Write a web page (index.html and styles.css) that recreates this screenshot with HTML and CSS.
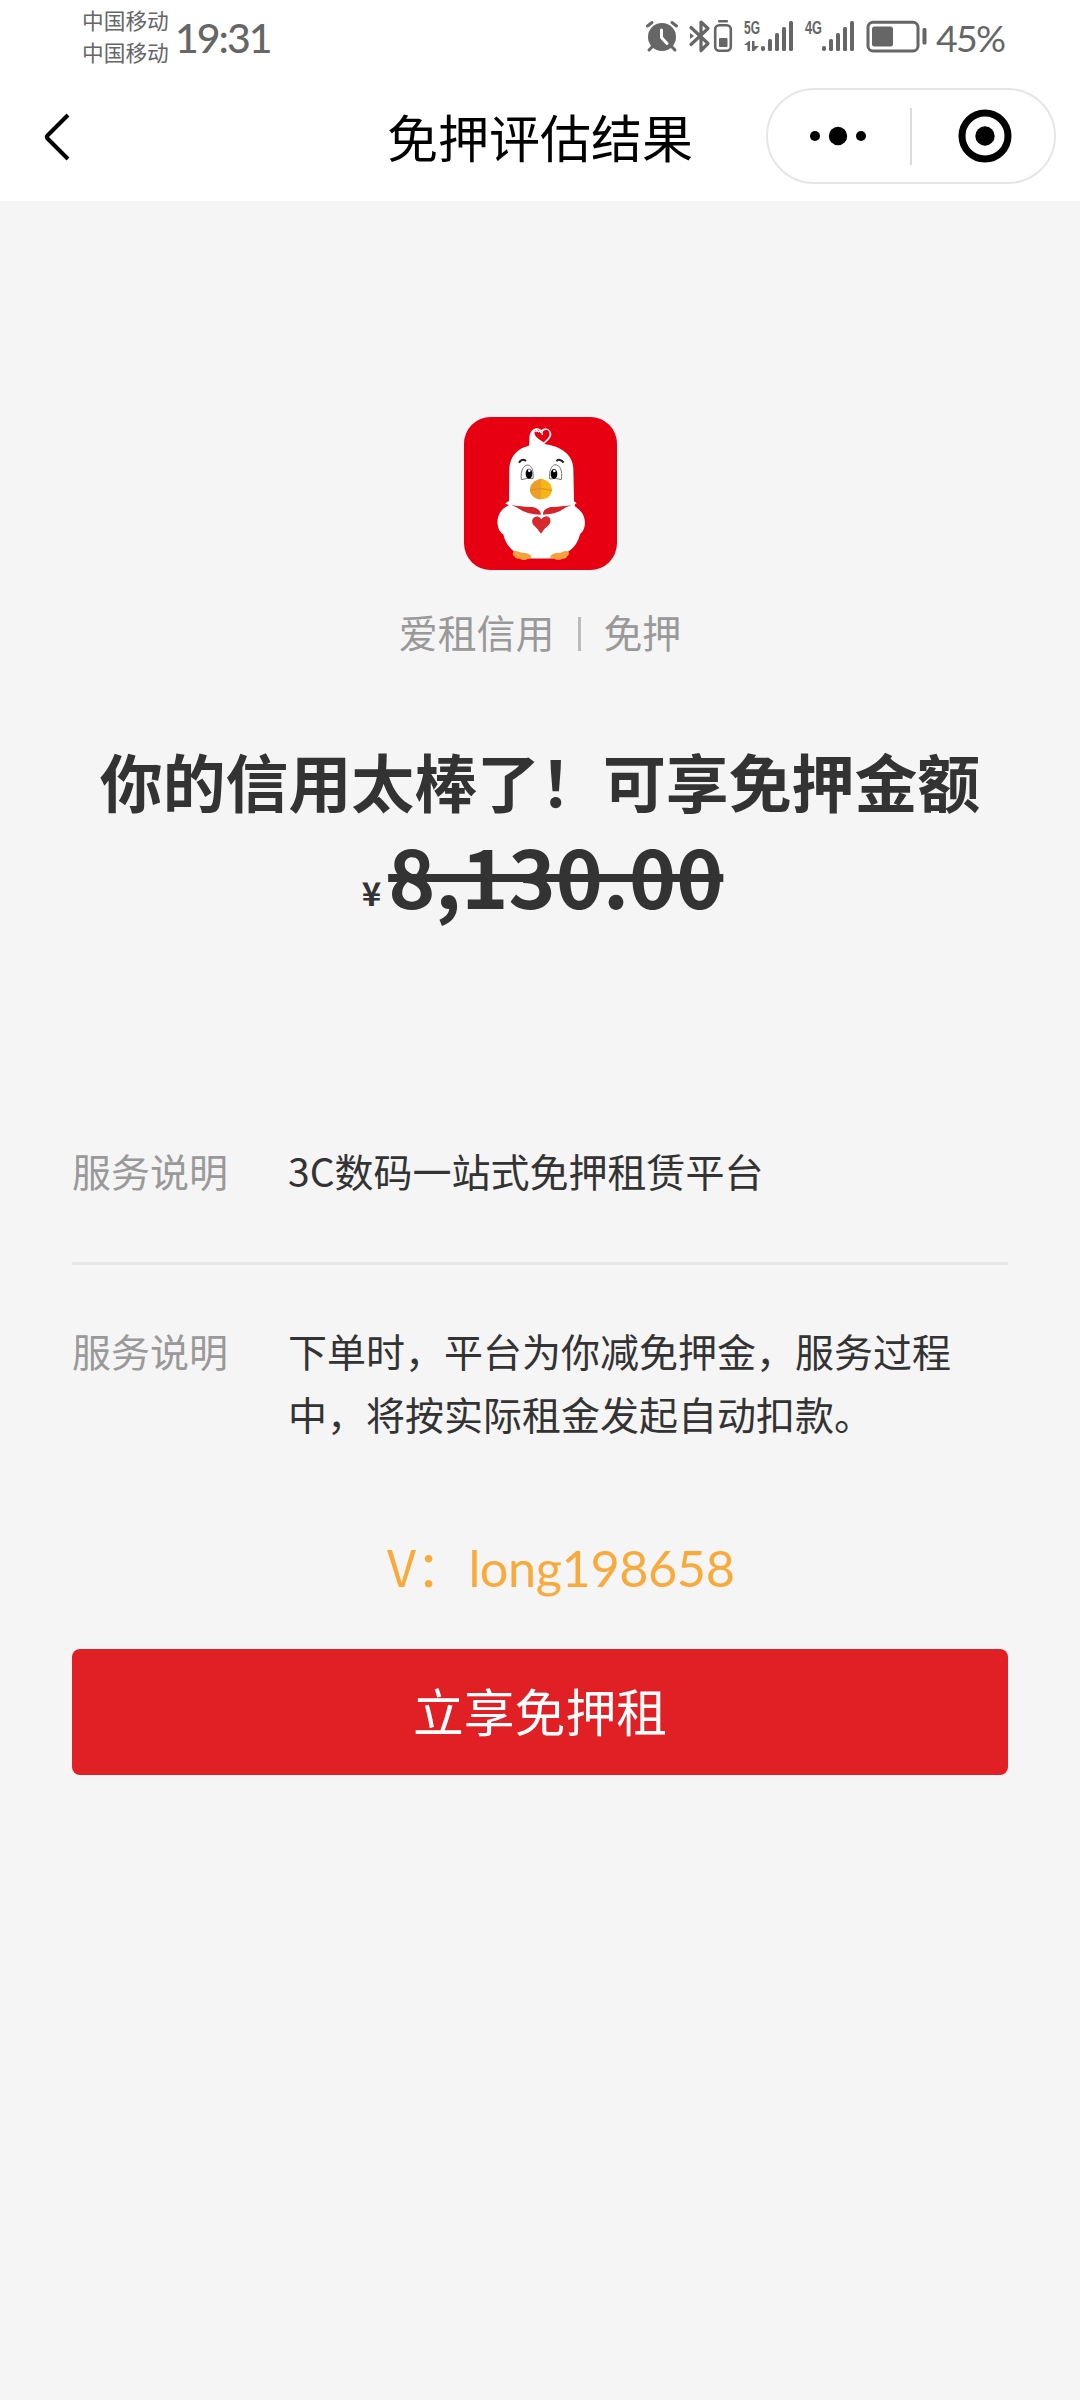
FILE: index.html
```html
<!DOCTYPE html>
<html lang="zh-CN">
<head>
<meta charset="utf-8">
<title>免押评估结果</title>
<link rel="stylesheet" href="styles.css">
</head>
<body>
<header class="top">
  <div class="status">
    <div class="carriers"><span>中国移动</span><span>中国移动</span></div>
    <div class="time">19:31</div>
    <svg class="icons" width="290" height="40" viewBox="640 16 290 40" fill="#666">
      <circle cx="662" cy="37" r="14"/>
      <path d="M647.500 26 652 22.500M676.500 26 672 22.500M652 47 649 50M672 47 675 50" stroke="#666" stroke-width="3" stroke-linecap="round"/>
      <path d="M661.500 30v7.500l5.500 6" fill="none" stroke="#fff" stroke-width="3" stroke-linecap="round" stroke-linejoin="round"/>
      <path d="M691 27.500 708 43.500 701 50.500V22L708 28.500 691 44.500" fill="none" stroke="#666" stroke-width="3.200" stroke-linejoin="round" stroke-linecap="round"/>
      <path d="M690 33l4 3-4 3z"/>
      <rect x="715.200" y="25.200" width="15.600" height="25.600" rx="4" fill="none" stroke="#666" stroke-width="2.600"/>
      <rect x="718" y="20" width="10" height="2.500" rx="1"/><rect x="719" y="38" width="8.500" height="9" rx="1"/>
      <text class="net" x="744" y="34" textLength="16" lengthAdjust="spacingAndGlyphs">5G</text>
      <path d="M744 45l5-4h1v10h-2.500v-6zM752 41h2.500v5h4.500l-5 5h-2z"/>
      <rect x="761" y="46" width="4" height="5" rx="1.800"/><rect x="768" y="39" width="4" height="12" rx="1.500"/><rect x="775" y="33" width="4" height="18" rx="1.500"/><rect x="782" y="27" width="4" height="24" rx="1.500"/><rect x="789" y="21" width="4" height="30" rx="1.500"/>
      <text class="net" x="805" y="34" textLength="17" lengthAdjust="spacingAndGlyphs">4G</text>
      <rect x="822" y="46" width="4" height="5" rx="1.800"/><rect x="829" y="39" width="4" height="12" rx="1.500"/><rect x="836" y="33" width="4" height="18" rx="1.500"/><rect x="843" y="27" width="4" height="24" rx="1.500"/><rect x="850" y="21" width="4" height="30" rx="1.500"/>
      <rect x="868" y="22.300" width="50" height="28.700" rx="5" fill="none" stroke="#666" stroke-width="3"/>
      <rect x="872" y="26.500" width="21" height="20" rx="2.500"/><rect x="922.500" y="28" width="4" height="16.500" rx="1.500"/>
    </svg>
    <div class="percent">45%</div>
  </div>
  <nav class="nav">
    <svg class="back" width="30" height="52" viewBox="0 0 30 52" fill="none" stroke="#000" stroke-width="4"><path d="M25 4 4.500 24.500Q3 26 4.500 27.500L25 48"/></svg>
    <h1 class="title">免押评估结果</h1>
    <div class="capsule">
      <svg class="more" width="58" height="20" viewBox="0 0 58 20"><circle cx="6" cy="10" r="5"/><circle cx="29" cy="10" r="9.200"/><circle cx="52" cy="10" r="5"/></svg>
      <i class="split"></i>
      <svg class="target" width="54" height="54" viewBox="0 0 54 54"><circle cx="27" cy="27" r="23" fill="none" stroke="#000" stroke-width="7"/><circle cx="27" cy="27" r="9.700"/></svg>
    </div>
  </nav>
</header>
<main class="page">
  <svg class="logo" width="153" height="153" viewBox="42 50 459 459">
    <rect x="42" y="50" width="459" height="459" rx="80" fill="#e60012"/>
    <path d="M236 137C241 124 234 108 243 95C250 84 262 80 274 89C288 78 304 88 304 103C302 116 290 122 283 131C328 136 369 161 370 205L372 303L380 309C370 314 373 317 384 325C406 342 411 372 397 394C387 402 389 410 383 421C372 446 350 457 325 472Q273 477 222 472C190 457 166 435 160 402C144 393 137 365 147 343C152 329 165 321 176 315L166 309L177 302L178 203C181 167 204 143 236 137Z" fill="#fff"/>
    <path d="M282 126C266 118 251 106 254 95C259 84 270 87 277 97C284 83 299 87 299 102C298 113 286 120 282 126Z" fill="#e60012"/>
    <path d="M257 95q4-7 8-1q5-5 7 2q6 0 5 8" fill="none" stroke="#fff" stroke-width="4"/>
    <path d="M207 187Q215 173 228 182M319 182Q330 173 341 187" fill="none" stroke="#222" stroke-width="6"/>
    <g fill="#fff" stroke="#777" stroke-width="3"><path d="M214 238C211 210 221 194 234 194C247 197 251 213 249 235Q232 232 214 238Z"/><path d="M299 236C297 213 303 196 315 193C331 194 338 211 334 238Q316 231 299 236Z"/></g>
    <ellipse cx="237" cy="220" rx="10" ry="15"/><ellipse cx="312" cy="221" rx="10" ry="15"/>
    <circle cx="238" cy="211" r="4" fill="#fff"/><circle cx="313" cy="212" r="4" fill="#fff"/>
    <path d="M274 235C292 238 307 252 306 270C304 287 291 297 273 297C255 296 241 284 240 268C240 253 255 238 274 235Z" fill="#f8b616"/>
    <path d="M274 235C255 238 240 253 240 268C242 287 257 297 273 297Z" fill="#eda029"/><path d="M241 270Q274 260 305 271" fill="none" stroke="#d98a22" stroke-width="3"/>
    <path d="M180 312Q207 318 245 319Q271 324 273 343Q229 343 202 322ZM369 312Q343 318 304 319Q278 325 279 343Q324 341 345 322Z" fill="#d5232c"/>
    <path d="M177 312Q273 327 372 312" fill="none" stroke="#fff" stroke-width="3"/>
    <path d="M273 400Q262 384 250 373C240 358 253 345 265 349Q271 351 274 357Q278 349 288 348C304 349 305 366 296 375Q283 384 273 400Z" fill="#d8292f"/>
    <path d="M190 454Q199 449 214 457Q234 456 243 466Q247 476 233 476Q221 482 209 475Q195 476 194 468Q185 464 190 454ZM356 454Q345 449 332 457Q310 456 302 466Q298 476 312 475Q325 482 337 475Q350 476 351 468Q359 464 356 454Z" fill="#f6a13b"/>
  </svg>
  <p class="brand"><span>爱租信用</span><i class="bar"></i><span>免押</span></p>
  <h2 class="headline">你的信用太棒了！可享免押金额</h2>
  <p class="amount"><span class="yen">¥</span><s class="price">8,130.00</s></p>
  <dl class="details">
    <div class="row"><dt>服务说明</dt><dd>3C数码一站式免押租赁平台</dd></div>
    <div class="row second"><dt>服务说明</dt><dd>下单时，平台为你减免押金，服务过程中，将按实际租金发起自动扣款。</dd></div>
  </dl>
  <p class="contact">V：<span>long198658</span></p>
  <button class="submit">立享免押租</button>
</main>
</body>
</html>
```
FILE: styles.css
```css
* { box-sizing: border-box; margin: 0; padding: 0; }
body {
  width: 1080px;
  min-height: 2400px;
  background: #f5f5f5;
  color: #333;
  font-family: "Noto Sans CJK SC", sans-serif;
}
svg { display: block; flex: none; }
.top { height: 201px; background: #fff; }
.status {
  display: flex;
  height: 72px;
  padding-left: 82px;
  color: #666;
  white-space: nowrap;
}
.carriers {
  display: flex;
  flex-direction: column;
  width: 93px;
  padding-top: 4px;
  font-size: 21.7px;
  line-height: 32px;
}
.time {
  width: 465px;
  padding-top: 13px;
  font-family: Lato, sans-serif;
  font-size: 41px;
  font-weight: 500;
  line-height: 50px;
  letter-spacing: -2px;
}
.icons { margin-top: 16px; }
.net { font: bold 18px "Liberation Sans", sans-serif; }
.percent {
  padding: 13px 0 0 6px;
  font-family: Lato, sans-serif;
  font-size: 37.5px;
  line-height: 50px;
  letter-spacing: -1.8px;
}
.nav {
  display: grid;
  grid-template-columns: 345px 390px 1fr;
  align-items: center;
  height: 128px;
  padding-right: 24px;
}
.back { margin-left: 43px; margin-top: 2px; }
.title {
  font-size: 51px;
  line-height: 70px;
  font-weight: 400;
  color: #000;
  text-align: center;
}
.capsule {
  display: flex;
  align-items: center;
  justify-self: end;
  width: 290px;
  height: 96px;
  border: 2px solid #e6e6e6;
  border-radius: 48px;
}
.more { margin-left: 41px; }
.split { width: 2px; height: 57px; margin: 0 46px 0 43px; background: #dcdcdc; }
.page { display: flex; flex-direction: column; padding: 216px 72px 0; }
.logo { align-self: center; }
.brand {
  display: flex;
  justify-content: center;
  align-items: center;
  margin-top: 33px;
  font-size: 38.9px;
  line-height: 56px;
  color: #999;
}
.bar { width: 3px; height: 34px; margin: 5px 22px 0 24px; background: #bbb; }
.headline {
  margin-top: 76px;
  font-size: 62.9px;
  line-height: 90px;
  font-weight: 700;
  text-align: center;
  white-space: nowrap;
}
.amount {
  display: flex;
  justify-content: center;
  align-items: center;
  height: 98px;
  padding-left: 5px;
  font-weight: 700;
  line-height: 98px;
}
.yen { margin: 36px 7px 0 0; font-size: 33px; line-height: 62px; }
.price { font-size: 80px; text-decoration-thickness: 8px; text-decoration-skip-ink: none; }
.details { margin-top: 216px; font-size: 39px; line-height: 63px; }
.row { display: flex; padding-bottom: 60px; border-bottom: 3px solid #e8e8e8; }
.row dt { width: 216px; flex: none; color: #999; }
.row dd { width: 670px; }
.second { padding: 54px 0 0; border: 0; }
.contact {
  height: 70px;
  margin: 86px 0 0 315px;
  font-size: 50.4px;
  line-height: 70px;
  color: #f8ab3c;
  white-space: nowrap;
}
.contact span { margin-left: 2px; font-family: Lato, sans-serif; letter-spacing: -0.4px; }
.submit {
  height: 126px;
  margin-top: 48px;
  padding-bottom: 5px;
  border: 0;
  border-radius: 8px;
  background: #e12025;
  color: #fff;
  font: 400 50.8px/70px "Noto Sans CJK SC", sans-serif;
}
```
